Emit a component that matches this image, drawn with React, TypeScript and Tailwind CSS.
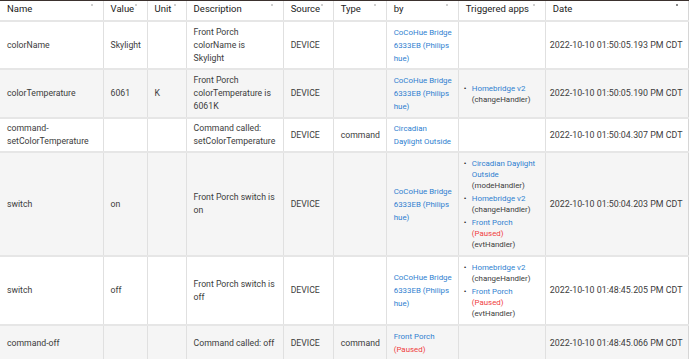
import React from 'react';

type App = { name: string; paused?: boolean; handler: string };
type Row = {
  name: string;
  value: string;
  unit: string;
  desc: string;
  type: string;
  by: string;
  byPaused?: boolean;
  apps: App[];
  date: string;
  h: string;
};

const rows: Row[] = [
  { name: 'colorName', value: 'Skylight', unit: '', desc: 'Front Porch colorName is Skylight', type: '', by: 'CoCoHue Bridge 6333EB (Philips hue)', apps: [], date: '2022-10-10 01:50:05.193 PM CDT', h: 'h-[48px]' },
  { name: 'colorTemperature', value: '6061', unit: 'K', desc: 'Front Porch colorTemperature is 6061K', type: '', by: 'CoCoHue Bridge 6333EB (Philips hue)', apps: [{ name: 'Homebridge v2', handler: 'changeHandler' }], date: '2022-10-10 01:50:05.190 PM CDT', h: 'h-[49px]' },
  { name: 'command-setColorTemperature', value: '', unit: '', desc: 'Command called: setColorTemperature', type: 'command', by: 'Circadian Daylight Outside', apps: [], date: '2022-10-10 01:50:04.307 PM CDT', h: 'h-[34px]' },
  {
    name: 'switch', value: 'on', unit: '', desc: 'Front Porch switch is on', type: '', by: 'CoCoHue Bridge 6333EB (Philips hue)',
    apps: [
      { name: 'Circadian Daylight Outside', handler: 'modeHandler' },
      { name: 'Homebridge v2', handler: 'changeHandler' },
      { name: 'Front Porch', paused: true, handler: 'evtHandler' },
    ],
    date: '2022-10-10 01:50:04.203 PM CDT', h: 'h-[102px]',
  },
  {
    name: 'switch', value: 'off', unit: '', desc: 'Front Porch switch is off', type: '', by: 'CoCoHue Bridge 6333EB (Philips hue)',
    apps: [
      { name: 'Homebridge v2', handler: 'changeHandler' },
      { name: 'Front Porch', paused: true, handler: 'evtHandler' },
    ],
    date: '2022-10-10 01:48:45.205 PM CDT', h: 'h-[69px]',
  },
  { name: 'command-off', value: '', unit: '', desc: 'Command called: off', type: 'command', by: 'Front Porch', byPaused: true, apps: [], date: '2022-10-10 01:48:45.066 PM CDT', h: 'h-[36px]' },
];

const headers = ['Name', 'Value', 'Unit', 'Description', 'Source', 'Type', 'by', 'Triggered apps', 'Date'];
const widths = ['w-[103px]', 'w-[44px]', 'w-[39px]', 'w-[97px]', 'w-[50px]', 'w-[53px]', 'w-[72px]', 'w-[87px]', 'w-[143px]'];

const td = 'border-r border-[#e0e0e0] px-[7px] align-middle';

export default function App() {
  return (
    <div className="min-h-screen w-[690px] bg-white font-['Roboto',sans-serif] text-[8.7px] leading-[13px] text-[#3c3c3c]">
      <div className="h-px w-[689px] bg-[#3b312e]" />
      <table className="w-[689px] table-fixed border-collapse border-r border-[#d6d6d6]">
        <colgroup>
          {widths.map((w, i) => (
            <col key={i} className={w} />
          ))}
        </colgroup>
        <thead>
          <tr className="h-[20px] border-b-2 border-[#e6e6e6]">
            {headers.map((h, i) => (
              <th
                key={h}
                className={`relative px-[7px] pt-px text-left align-top text-[9.5px] font-normal text-[#222] ${i < headers.length - 1 ? 'border-r border-[#e0e0e0]' : ''}`}
              >
                {h}
                <span className={`absolute right-[10px] top-[3px] h-[2px] w-[2px] ${i === headers.length - 1 ? 'bg-[#8a8a8a]' : 'bg-[#cfcfcf]'}`} />
              </th>
            ))}
          </tr>
        </thead>
        <tbody>
          {rows.map((r, i) => (
            <tr key={i} className={`${r.h} border-b-2 border-[#e6e6e6] ${i % 2 === 1 ? 'bg-[#f5f5f5]' : 'bg-white'}`}>
              <td className={td}>{r.name}</td>
              <td className={td}>{r.value}</td>
              <td className={td}>{r.unit}</td>
              <td className={td}>{r.desc}</td>
              <td className={td}>DEVICE</td>
              <td className={td}>{r.type}</td>
              <td className={`${td} pr-[5px] text-[7.9px] text-[#2f7fd0]`}>
                {r.by}
                {r.byPaused && <span className="block text-[#f03e3e]">(Paused)</span>}
              </td>
              <td className={`${td} pl-[5px] pr-[4px] py-[5px]`}>
                {r.apps.length > 0 && (
                  <ul className="flex flex-col gap-[2px] text-[7.9px] leading-[11px]">
                    {r.apps.map((a, j) => (
                      <li key={j} className="flex">
                        <span className="w-[8px] shrink-0 text-[#222]">•</span>
                        <span>
                          <span className="block text-[#2f7fd0]">{a.name}</span>
                          {a.paused && <span className="block text-[#f03e3e]">(Paused)</span>}
                          <span className="block text-[#3c3c3c]">({a.handler})</span>
                        </span>
                      </li>
                    ))}
                  </ul>
                )}
              </td>
              <td className="whitespace-nowrap pl-[4px] pr-0 align-middle text-[8.85px]">{r.date}</td>
            </tr>
          ))}
        </tbody>
      </table>
    </div>
  );
}
